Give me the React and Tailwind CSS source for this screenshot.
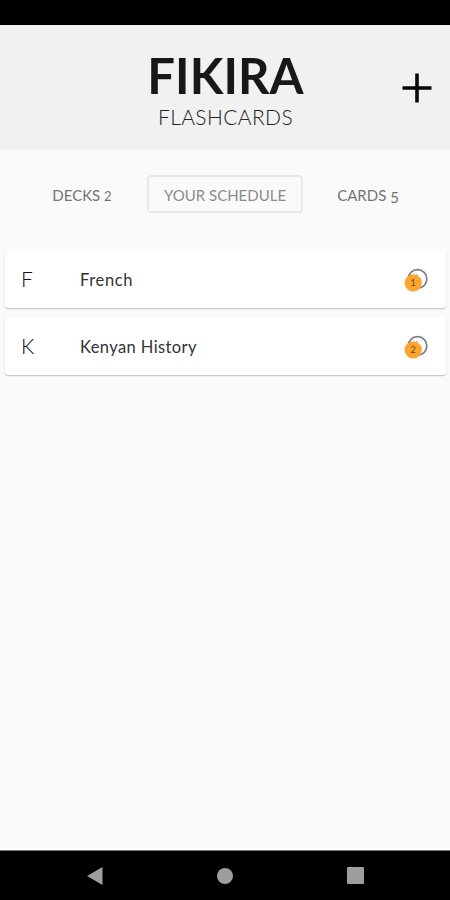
const decks = [
  { name: 'French', due: 1, spacing: 'tracking-[0.65px]' },
  { name: 'Kenyan History', due: 2, spacing: 'tracking-[0.4px]' },
];

function Header() {
  return (
    <header className="grid grid-cols-[66px_1fr_66px] items-center h-[125px] shrink-0 bg-[#f1f1f1]">
      <div className="col-start-2 flex flex-col items-center pt-[8px] pl-px">
        <h1 className="text-[49px] leading-[50px] font-bold text-[#181818] tracking-[0.1px] whitespace-nowrap">FIKIRA</h1>
        <p className="text-[21px] leading-[33px] font-light text-[#222] tracking-[0.4px] whitespace-nowrap">FLASHCARDS</p>
      </div>
      <button type="button" aria-label="Add deck" className="justify-self-center">
        <svg className="w-[30px] h-[30px]" viewBox="0 0 30 30" stroke="#080808" strokeWidth="3.6">
          <path d="M15 0.5V29.5M0.5 15H29.5" />
        </svg>
      </button>
    </header>
  );
}

function Tabs() {
  return (
    <nav className="flex items-center h-[37px] mt-[25.5px] shrink-0 text-[15px] text-[#747474] whitespace-nowrap">
      <button type="button" className="w-[94px] ml-[35px] pt-[2px]">
        DECKS <span className="text-[13px]">2</span>
      </button>
      <button type="button" className="w-[156px] h-[38px] ml-[18px] pt-[2px] border-2 border-[#e9e9e9] rounded-[4px] text-[#8c8c8c]">
        YOUR SCHEDULE
      </button>
      <button type="button" className="w-[94px] ml-[18px] pt-[2px]">
        CARDS <span className="relative top-[2px]">5</span>
      </button>
    </nav>
  );
}

function DueBadge({ count }) {
  return (
    <svg className="w-[24px] h-[26px] mt-[4px]" viewBox="0 0 24 26">
      <circle cx="13.5" cy="11" r="9.3" fill="none" stroke="#7b7d80" strokeWidth="1.7" />
      <path d="M13 6V11H17" fill="none" stroke="#a9b59a" strokeWidth="1.3" />
      <circle cx="9.2" cy="14.8" r="8.6" fill="#fda52e" />
      <text x="9.2" y="18.4" textAnchor="middle" fontSize="9" fill="#6b4516">{count}</text>
    </svg>
  );
}

function DeckRow({ deck }) {
  return (
    <li className="flex items-center h-[58px] pl-[16px] pr-[18px] bg-white rounded-[3px] shadow-[0_1px_1.5px_rgba(0,0,0,0.24)]">
      <span className="w-[59px] pb-[1px] text-[21px] leading-none font-light text-[#111]">{deck.name[0]}</span>
      <span className={`flex-1 pt-[2px] text-[16.5px] text-[#333] ${deck.spacing}`}>{deck.name}</span>
      <DueBadge count={deck.due} />
    </li>
  );
}

function SystemNav() {
  return (
    <footer className="h-[50px] shrink-0 flex items-center bg-black border-t border-[#777] text-[#9e9e9e]">
      <svg className="w-[16px] h-[18px] ml-[87px]" viewBox="0 0 16 18" fill="currentColor">
        <path d="M0 9L15.5 0V18Z" />
      </svg>
      <div className="w-[16px] h-[16px] ml-[114px] rounded-full bg-[#9e9e9e]" />
      <div className="w-[17px] h-[17px] ml-[114px] rounded-[1px] bg-[#9e9e9e]" />
    </footer>
  );
}

export default function App() {
  return (
    <div className="w-[450px] h-[900px] flex flex-col overflow-hidden bg-[#fafafa] font-['Lato',sans-serif]">
      <div className="h-[25px] shrink-0 bg-black" />
      <Header />
      <Tabs />
      <ul className="flex-1 flex flex-col gap-[9px] pl-[5px] pr-[4px] mt-[37.5px]">
        {decks.map((deck) => (
          <DeckRow key={deck.name} deck={deck} />
        ))}
      </ul>
      <SystemNav />
    </div>
  );
}
